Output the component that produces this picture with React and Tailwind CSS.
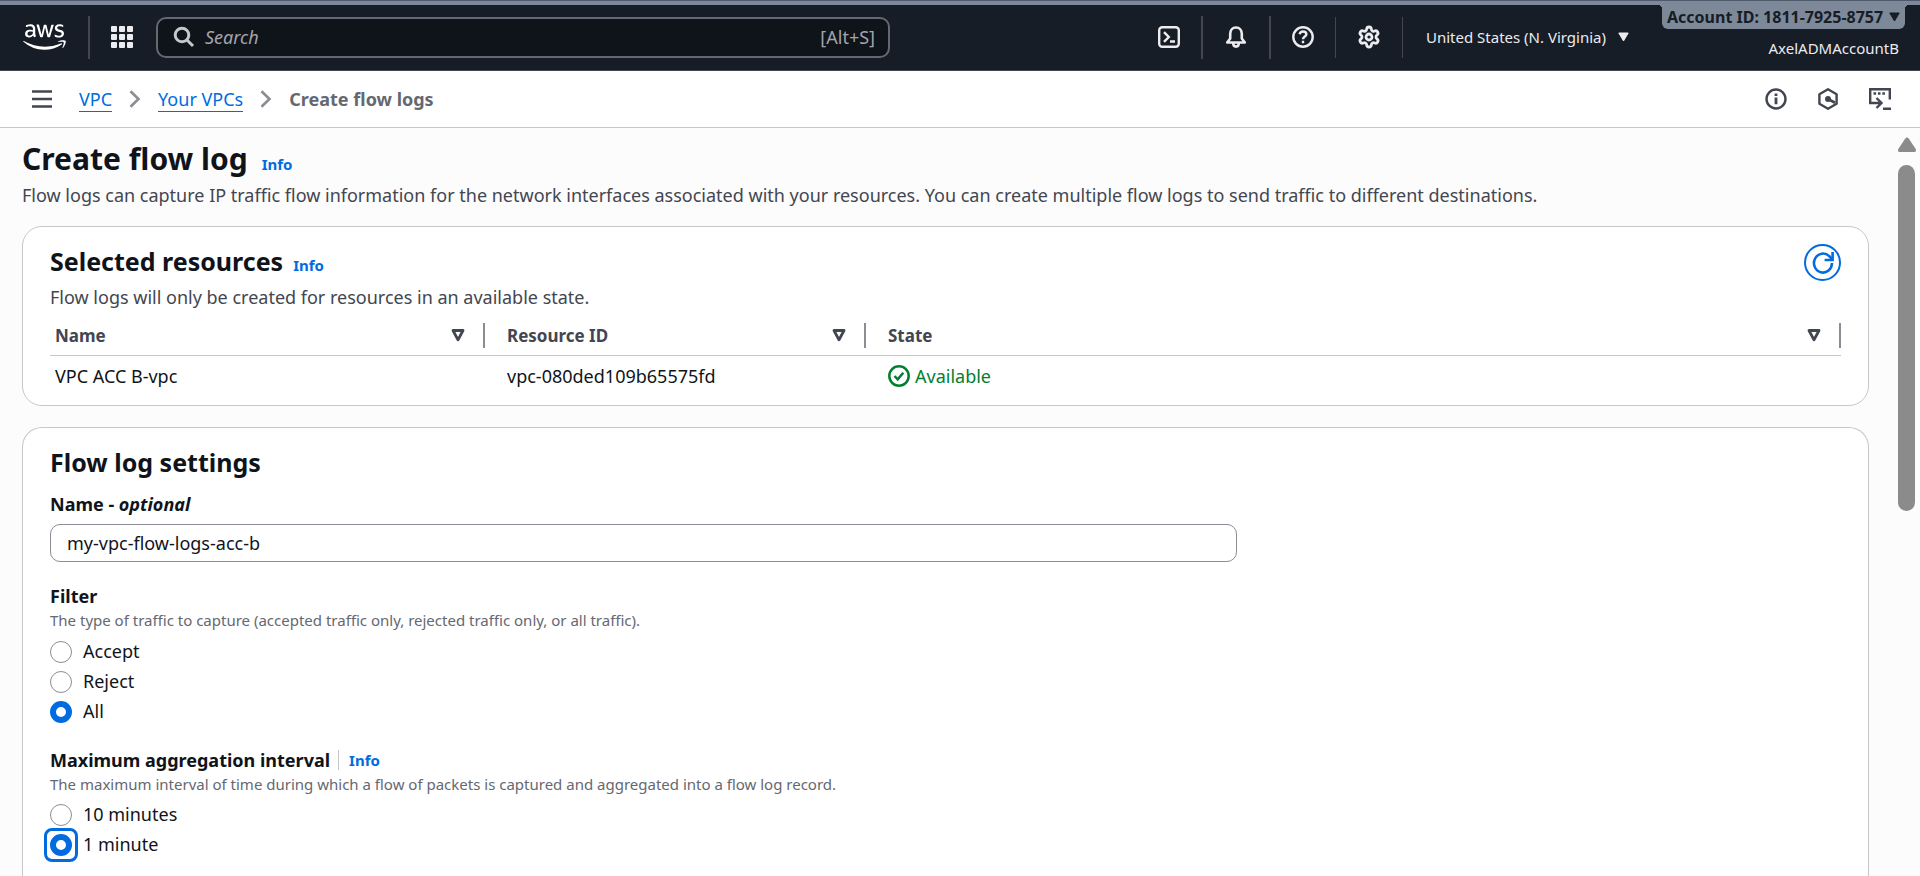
import { useState } from "react";
import { FaAws } from "react-icons/fa";
import { Settings } from "lucide-react";

const Stroke = ({ size = 22, box = 22, width = 2, className = "", children }) => (
  <svg
    width={size}
    height={size}
    viewBox={`0 0 ${box} ${box}`}
    fill="none"
    stroke="currentColor"
    strokeWidth={width}
    className={`shrink-0 ${className}`}
    aria-hidden="true"
  >
    {children}
  </svg>
);

const Divider = ({ className }) => <span className={`shrink-0 bg-[#424650] ${className}`} />;

const Caret = () => (
  <svg width="11" height="10" viewBox="0 0 11 10" className="shrink-0" aria-hidden="true">
    <path d="M.8 1h9.4L5.5 9z" fill="currentColor" stroke="currentColor" strokeLinejoin="round" />
  </svg>
);

const Chevron = () => (
  <svg width="12" height="18" viewBox="0 0 12 18" fill="none" stroke="#8c8c94" strokeWidth="2.6" aria-hidden="true">
    <path d="M1.5 1.2 9.5 9l-8 7.8" />
  </svg>
);

const SortIcon = () => (
  <svg width="14" height="13" viewBox="0 0 14 13" fill="none" aria-hidden="true">
    <path d="M2 1.5h10L7 10.8z" stroke="#424650" strokeWidth="2.8" strokeLinejoin="round" />
  </svg>
);

const InfoLink = () => (
  <a href="#info" className="text-[15px] leading-5 font-bold text-[#006ce0]">
    Info
  </a>
);

function TopBar() {
  return (
    <header className="relative flex h-[71px] shrink-0 items-center border-b border-[#424650] bg-[#161d26] pt-1 pl-[23px] text-[#ebebf0]">
      <div className="absolute inset-x-0 top-0 h-[5px] border-t border-[#4f5b6c] bg-[#7d8998]" />
      <a href="#home" aria-label="AWS home" className="flex w-[43px] shrink-0 justify-center text-white">
        <FaAws size={34} className="h-[34px] w-[43px]" />
      </a>
      <Divider className="ml-[22px] h-[43px] w-[2px]" />
      <button aria-label="Services" className="ml-[21px] shrink-0">
        <svg width="22" height="22" viewBox="0 0 22 22" fill="currentColor" aria-hidden="true">
          {[0, 8, 16].map((y) =>
            [0, 8, 16].map((x) => <rect key={`${x}-${y}`} x={x} y={y} width="6" height="6" rx="1" />)
          )}
        </svg>
      </button>
      <label className="ml-[23px] flex h-[41px] w-[734px] items-center rounded-[10px] border-2 border-[#656871] bg-[#0f141a] pr-[13px] pl-[15px]">
        <Stroke className="text-[#c6c6cd]" width={3}>
          <circle cx="9" cy="9" r="6.8" />
          <path d="m14 14 6 6" />
        </Stroke>
        <input
          type="search"
          aria-label="Search"
          placeholder="Search"
          className="ml-[10px] min-w-0 flex-1 bg-transparent text-[18px] outline-none placeholder:text-[#a4a4ad] placeholder:italic"
        />
        <span className="text-[18px] text-[#a4a4ad]">[Alt+S]</span>
      </label>
      <nav className="ml-auto flex shrink-0 items-center">
        <button aria-label="CloudShell" className="mr-[21px]">
          <Stroke width={2.4}>
            <rect x="1.2" y="1.2" width="19.6" height="19.6" rx="3" />
            <path d="m6 6.2 4.8 4.8L6 15.8M12 15.5h5" />
          </Stroke>
        </button>
        <Divider className="h-[43px] w-[2px]" />
        <button aria-label="Notifications" className="mx-[22px]">
          <Stroke width={2.6}>
            <path d="M2.2 16.5h17.6l-3-4V8c0-4-2.3-6.5-5.8-6.5S5.200 4 5.200 8v4.500z" strokeLinejoin="round" />
            <path d="M8.200 17c0 2.300 1.200 3.600 2.800 3.600s2.800-1.300 2.800-3.600" />
          </Stroke>
        </button>
        <Divider className="h-[43px] w-[2px]" />
        <button aria-label="Help" className="mx-[21px]">
          <Stroke width={2.4}>
            <circle cx="11" cy="11" r="9.700" />
            <path d="M7.600 8.300c.3-1.700 1.600-2.800 3.400-2.800 2 0 3.400 1.100 3.400 2.700 0 2.400-3.400 2.300-3.400 5.100M11 14.800v2.400" />
          </Stroke>
        </button>
        <Divider className="h-[41px] w-px" />
        <button aria-label="Settings" className="mx-[21px]">
          <Settings size={24} strokeWidth={2.8} />
        </button>
        <Divider className="h-[41px] w-px" />
        <button className="ml-[23px] flex items-center gap-3 text-[15px]">
          United States (N. Virginia)
          <Caret />
        </button>
      </nav>
      <div className="ml-8 flex w-[259px] shrink-0 flex-col items-end self-stretch">
        <button className="relative mr-[15px] flex h-[25px] w-[243px] items-center justify-between rounded-b-md bg-[#7d8998] px-[5px] text-[16px] font-bold whitespace-nowrap text-[#161d26]">
          <span className="absolute top-px -left-1 size-1 bg-[radial-gradient(circle_at_0_100%,transparent_4px,#7d8998_4px)]" />
          <span className="absolute top-px -right-1 size-1 bg-[radial-gradient(circle_at_100%_100%,transparent_4px,#7d8998_4px)]" />
          Account ID: 1811-7925-8757
          <Caret />
        </button>
        <button className="mt-[9px] mr-[21px] text-[15px] leading-5">AxelADMAccountB</button>
      </div>
    </header>
  );
}

function Breadcrumbs() {
  return (
    <div className="flex h-[57px] shrink-0 items-center border-b border-[#c6c6cd] bg-white pr-[29px] pl-[32px] text-[#424650]">
      <button aria-label="Open navigation">
        <Stroke size={20} box={20} width={2.6}>
          <path d="M0 2.500h20M0 10h20M0 17.500h20" />
        </Stroke>
      </button>
      <nav aria-label="Breadcrumb" className="ml-[27px] flex items-center gap-[17px] text-[18px] leading-6">
        <a href="#vpc" className="border-b border-[#006ce0] text-[#006ce0]">
          VPC
        </a>
        <Chevron />
        <a href="#vpcs" className="border-b border-[#006ce0] text-[#006ce0]">
          Your VPCs
        </a>
        <Chevron />
        <span className="font-bold text-[#656871]">Create flow logs</span>
      </nav>
      <div className="ml-auto flex items-center gap-[30px]">
        <button aria-label="Information">
          <Stroke width={2.4}>
            <circle cx="11" cy="11" r="9.500" />
            <path d="M11 5.500v2.400M11 9.500v6.800" strokeWidth="2.800" />
          </Stroke>
        </button>
        <button aria-label="Amazon Q">
          <Stroke width={2.4}>
            <path d="m11 1.300 8.600 4.900v9.600L11 20.700l-8.600-4.900V6.200z" strokeLinejoin="round" />
            <circle cx="11" cy="11" r="3" fill="currentColor" stroke="none" />
            <path d="m11 11 7 3.700" strokeWidth="2.800" />
          </Stroke>
        </button>
        <button aria-label="Open shell">
          <Stroke width={2.4}>
            <path d="M8 15H1.200V1.200h19.600v10.300M14 20.700h8M6.500 15h5M7.500 10l5 5-5 5" />
            <path d="M4.500 5.500h11.400" strokeDasharray="2.600 1.800" />
          </Stroke>
        </button>
      </div>
    </div>
  );
}

function HeaderCell({ label, pad }) {
  return (
    <th className="border-b border-[#c6c6cd] p-0 font-bold">
      <div className={`mb-[7px] flex h-[25px] items-center justify-between border-r-2 border-[#8c8c94] pr-[18px] ${pad}`}>
        {label}
        <button aria-label={`Sort by ${label}`}>
          <SortIcon />
        </button>
      </div>
    </th>
  );
}

function SelectedResources() {
  return (
    <section className="rounded-[20px] border border-[#c6c6cd] bg-white px-[27px] pt-[17px] pb-2">
      <div className="flex items-start justify-between">
        <div>
          <div className="flex items-baseline gap-[10px]">
            <h2 className="text-[25px] leading-[34px] font-bold text-[#0f141a]">Selected resources</h2>
            <InfoLink />
          </div>
          <p className="mt-[7px] text-[18px] leading-6">Flow logs will only be created for resources in an available state.</p>
        </div>
        <button
          aria-label="Refresh"
          className="flex size-[37px] items-center justify-center rounded-full border-2 border-[#006ce0] text-[#006ce0]"
        >
          <Stroke width={2.6}>
            <path d="M20 11a9 9.500 0 1 1-2.800-6.800L20 7" />
            <path d="M20.600 0v8h-8" />
          </Stroke>
        </button>
      </div>
      <table className="mt-[14px] w-full table-fixed border-collapse text-left text-[17px]">
        <colgroup>
          <col className="w-[435px]" />
          <col className="w-[381px]" />
          <col />
        </colgroup>
        <thead>
          <tr>
            <HeaderCell label="Name" pad="pl-[5px]" />
            <HeaderCell label="Resource ID" pad="pl-[22px]" />
            <HeaderCell label="State" pad="pl-[22px]" />
          </tr>
        </thead>
        <tbody>
          <tr className="h-[41px] text-[18px] text-[#0f141a]">
            <td className="pl-[5px]">VPC ACC B-vpc</td>
            <td className="pl-[22px]">vpc-080ded109b65575fd</td>
            <td className="pl-[22px]">
              <span className="flex items-center gap-[5px] text-[#00802f]">
                <Stroke width={2.5}>
                  <circle cx="11" cy="11" r="9.700" />
                  <path d="m6.500 11 3.200 3.300 5.600-6.600" />
                </Stroke>
                Available
              </span>
            </td>
          </tr>
        </tbody>
      </table>
    </section>
  );
}

function RadioGroup({ name, options, value, onChange, focused }) {
  return (
    <div className="flex flex-col gap-2">
      {options.map((option) => (
        <label key={option} className="flex h-[22px] items-center gap-[11px] self-start text-[18px] text-[#0f141a]">
          <span className="relative flex">
            <input
              type="radio"
              name={name}
              checked={value === option}
              onChange={() => onChange(option)}
              className="size-[22px] shrink-0 appearance-none rounded-full border border-[#8c8c94] bg-white outline-none checked:border-[6px] checked:border-[#006ce0]"
            />
            {focused === option && (
              <span className="pointer-events-none absolute -inset-[6px] rounded-lg border-3 border-[#006ce0]" />
            )}
          </span>
          {option}
        </label>
      ))}
    </div>
  );
}

function FlowLogSettings() {
  const [name, setName] = useState("my-vpc-flow-logs-acc-b");
  const [filter, setFilter] = useState("All");
  const [interval, setAggregation] = useState("1 minute");
  return (
    <section className="rounded-t-[20px] border border-b-0 border-[#c6c6cd] bg-white px-[27px] pt-[17px] pb-10">
      <h2 className="text-[25px] leading-[34px] font-bold text-[#0f141a]">Flow log settings</h2>
      <label htmlFor="log-name" className="mt-[13px] block text-[18px] leading-6 font-bold text-[#0f141a]">
        Name - <i>optional</i>
      </label>
      <input
        id="log-name"
        value={name}
        onChange={(e) => setName(e.target.value)}
        className="mt-2 block h-[38px] w-[1187px] max-w-full rounded-[10px] border border-[#8c8c94] bg-white px-4 text-[18px] text-[#0f141a]"
      />
      <fieldset className="mt-[22px]">
        <legend className="text-[18px] leading-6 font-bold text-[#0f141a]">Filter</legend>
        <p className="mb-[9px] text-[15px] leading-6 text-[#656871]">
          The type of traffic to capture (accepted traffic only, rejected traffic only, or all traffic).
        </p>
        <RadioGroup name="filter" options={["Accept", "Reject", "All"]} value={filter} onChange={setFilter} />
      </fieldset>
      <fieldset className="mt-[25px]">
        <legend className="flex items-center text-[18px] leading-6 font-bold text-[#0f141a]">
          Maximum aggregation interval
          <span className="mr-[10px] ml-2 h-5 w-px bg-[#c6c6cd]" />
          <InfoLink />
        </legend>
        <p className="mb-2 text-[15px] leading-6 text-[#656871]">
          The maximum interval of time during which a flow of packets is captured and aggregated into a flow log record.
        </p>
        <RadioGroup
          name="interval"
          options={["10 minutes", "1 minute"]}
          value={interval}
          onChange={setAggregation}
          focused="1 minute"
        />
      </fieldset>
    </section>
  );
}

function Scrollbar() {
  return (
    <div className="flex w-[27px] shrink-0 flex-col items-center pt-[9px] text-[#8b8b8b]" aria-hidden="true">
      <svg width="20" height="16" viewBox="0 0 20 16" fill="currentColor">
        <path d="M8.300 1.500q1.700-1.800 3.400 0l7 10.500q1 3-1.500 3H2.800q-2.500 0-1.500-3z" />
      </svg>
      <div className="mt-3 h-[346px] w-[17px] rounded-full bg-[#8b8b8b]" />
    </div>
  );
}

export default function App() {
  return (
    <div className="flex h-screen flex-col overflow-hidden bg-[#fcfcfc] font-['Noto_Sans',sans-serif] text-[#424650]">
      <TopBar />
      <Breadcrumbs />
      <div className="flex min-h-0 flex-1">
        <main className="min-w-0 flex-1 overflow-hidden pt-[11px] pr-6 pl-[22px]">
          <div className="flex items-baseline gap-[14px]">
            <h1 className="text-[30px] leading-10 font-bold text-[#0f141a]">Create flow log</h1>
            <InfoLink />
          </div>
          <p className="mt-1 mb-[19px] text-[18px] leading-6">
            Flow logs can capture IP traffic flow information for the network interfaces associated with your resources.
            You can create multiple flow logs to send traffic to different destinations.
          </p>
          <div className="flex flex-col gap-[21px]">
            <SelectedResources />
            <FlowLogSettings />
          </div>
        </main>
        <Scrollbar />
      </div>
    </div>
  );
}
